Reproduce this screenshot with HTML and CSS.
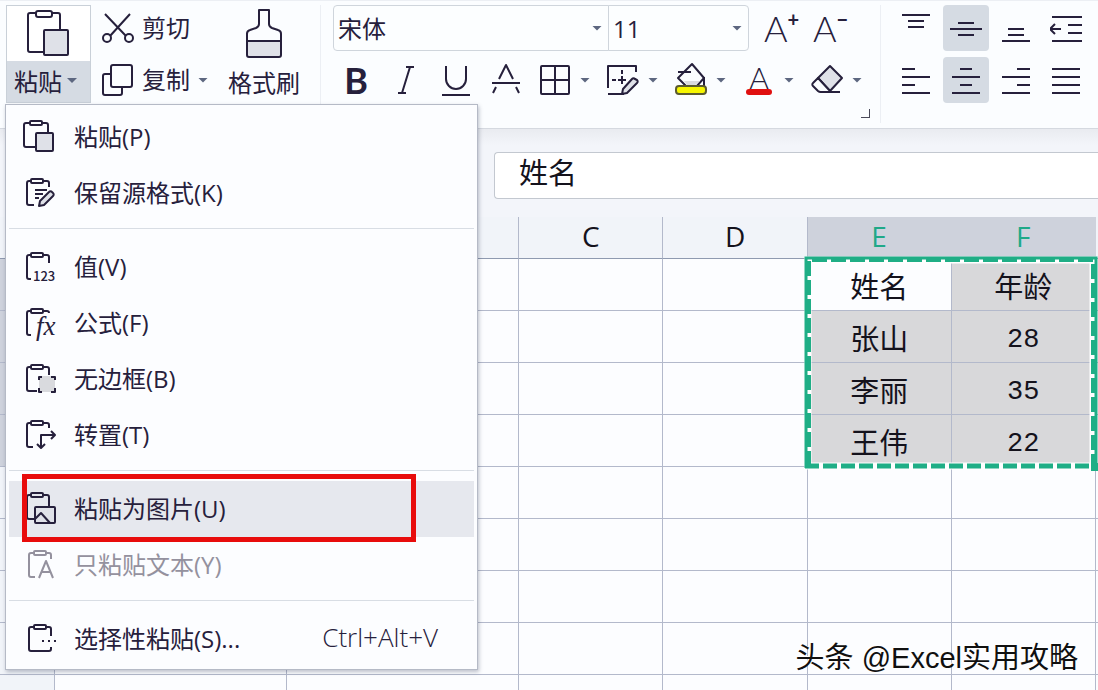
FILE: index.html
```html
<!DOCTYPE html>
<html lang="zh-CN">
<head>
    <meta charset="UTF-8">
    <meta name="viewport" content="width=device-width, initial-scale=1.0">
    <title>表格</title>
    <link rel="stylesheet" href="styles.css">
</head>
<body>

    <header class="ribbon">
        <div class="group clipboard">
            <div class="paste">
                <button class="paste-main" aria-label="粘贴">
                    <svg width="44" height="48" viewBox="0 0 44 48">
                        <path d="M16 42H3a2 2 0 0 1-2-2V5a2 2 0 0 1 2-2h6M25 3h6a2 2 0 0 1 2 2v14"/>
                        <rect x="9" y="1" width="16" height="6" rx="2"/>
                        <rect class="shade" x="17" y="20" width="24" height="25" rx="1"/>
                    </svg>
                </button>
                <button class="paste-more">粘贴<i class="arrow"></i></button>

                <div class="menu">
                    <button class="item">
                        <svg width="36" height="36" viewBox="0 0 36 36">
                            <path d="M14 28H4a2 2 0 0 1-2-2V6a2 2 0 0 1 2-2h4M20 4h4a2 2 0 0 1 2 2v7"/>
                            <rect x="8" y="2" width="12" height="4" rx="1"/>
                            <rect class="shade" x="14" y="14" width="17" height="18" rx="1"/>
                        </svg>
                        <span>粘贴(P)</span>
                    </button>
                    <button class="item">
                        <svg width="36" height="36" viewBox="0 0 36 36">
                            <path d="M12 30H7a2 2 0 0 1-2-2V8a2 2 0 0 1 2-2h2M21 6h4a2 2 0 0 1 2 2v4"/>
                            <rect x="9" y="4" width="12" height="4" rx="1"/>
                            <path d="M13 15h12M13 19h8M13 23h4"/>
                            <path class="shade" d="M17 31l1-5 9-9a2 2 0 0 1 3 0l1 1a2 2 0 0 1 0 3l-9 9z"/>
                        </svg>
                        <span>保留源格式(K)</span>
                    </button>
                    <hr>
                    <button class="item">
                        <svg width="36" height="36" viewBox="0 0 36 36">
                            <path d="M9 30H7a2 2 0 0 1-2-2V8a2 2 0 0 1 2-2h2M21 6h4a2 2 0 0 1 2 2v6"/>
                            <rect x="9" y="4" width="12" height="4" rx="1"/>
                            <text class="icon-num" x="11" y="32">123</text>
                        </svg>
                        <span>值(V)</span>
                    </button>
                    <button class="item">
                        <svg width="36" height="36" viewBox="0 0 36 36">
                            <path d="M9 30H7a2 2 0 0 1-2-2V8a2 2 0 0 1 2-2h2M21 6h4a2 2 0 0 1 2 2"/>
                            <rect x="9" y="4" width="12" height="4" rx="1"/>
                            <text class="icon-fx" x="14" y="30">fx</text>
                        </svg>
                        <span>公式(F)</span>
                    </button>
                    <button class="item">
                        <svg width="36" height="36" viewBox="0 0 36 36">
                            <path d="M15 30H7a2 2 0 0 1-2-2V8a2 2 0 0 1 2-2h2M21 6h4a2 2 0 0 1 2 2v6"/>
                            <rect x="9" y="4" width="12" height="4" rx="1"/>
                            <rect class="fill" x="17" y="15" width="16" height="16"/>
                            <path d="M17 19v-3h3M29 16h4v3M33 27v4h-4M20 31h-3v-4"/>
                        </svg>
                        <span>无边框(B)</span>
                    </button>
                    <button class="item">
                        <svg width="36" height="36" viewBox="0 0 36 36">
                            <path d="M11 30H7a2 2 0 0 1-2-2V8a2 2 0 0 1 2-2h2M21 6h4a2 2 0 0 1 2 2v3"/>
                            <rect x="9" y="4" width="12" height="4" rx="1"/>
                            <path d="M19 31V18h14M15 27l4 4 4-4M29 14l4 4-4 4"/>
                        </svg>
                        <span>转置(T)</span>
                    </button>
                    <hr>
                    <button class="item active">
                        <svg width="36" height="36" viewBox="0 0 36 36">
                            <path d="M12 28H7a2 2 0 0 1-2-2V6a2 2 0 0 1 2-2h2M21 4h4a2 2 0 0 1 2 2v9"/>
                            <rect x="9" y="2" width="12" height="4" rx="1"/>
                            <rect class="shade" x="13" y="16" width="20" height="16" rx="1"/>
                            <path d="M13 28l6-6 9 10"/>
                        </svg>
                        <span>粘贴为图片(U)</span>
                        <i class="mark"></i>
                    </button>
                    <button class="item" disabled>
                        <svg width="36" height="36" viewBox="0 0 36 36">
                            <path d="M13 30H9a2 2 0 0 1-2-2V8a2 2 0 0 1 2-2h3M24 6h3a2 2 0 0 1 2 2v4"/>
                            <rect x="12" y="4" width="12" height="4" rx="1"/>
                            <path d="M17 31l7-17 7 17M20 25h8"/>
                        </svg>
                        <span>只粘贴文本(Y)</span>
                    </button>
                    <hr>
                    <button class="item">
                        <svg width="36" height="36" viewBox="0 0 36 36">
                            <path d="M29 26v2a2 2 0 0 1-2 2H9a2 2 0 0 1-2-2V8a2 2 0 0 1 2-2h3M24 6h3a2 2 0 0 1 2 2v7"/>
                            <rect x="12" y="4" width="12" height="4" rx="1"/>
                            <path d="M20 20h2M26 20h2M32 20h2"/>
                        </svg>
                        <span>选择性粘贴(S)...</span>
                        <kbd>Ctrl+Alt+V</kbd>
                    </button>
                </div>
            </div>

            <div class="edit">
                <button>
                    <svg width="32" height="32" viewBox="0 0 32 32">
                        <path d="M3 2l21 22M28 2L8 24"/>
                        <circle cx="5" cy="26" r="4"/>
                        <circle cx="27" cy="26" r="4"/>
                    </svg>
                    <span>剪切</span>
                </button>
                <button>
                    <svg width="32" height="32" viewBox="0 0 32 32">
                        <path d="M9 10H3a2 2 0 0 0-2 2v17a2 2 0 0 0 2 2h15a2 2 0 0 0 2-2v-5"/>
                        <rect x="9" y="1" width="21" height="22" rx="2"/>
                    </svg>
                    <span>复制</span><i class="arrow"></i>
                </button>
            </div>

            <button class="brush">
                <svg width="38" height="50" viewBox="0 0 38 50">
                    <path class="shade" d="M2 32h34v14a2 2 0 0 1-2 2H4a2 2 0 0 1-2-2z"/>
                    <path d="M2 32v-7a4 4 0 0 1 3-4l6-2c2-1 3-2 3-4V1h10v14c0 2 1 3 3 4l6 2a4 4 0 0 1 3 4v7"/>
                </svg>
                格式刷
            </button>
        </div>

        <div class="group font">
            <div class="row">
                <label class="pick family">
                    <select aria-label="字体"><option>宋体</option></select>
                    <i class="arrow"></i>
                </label>
                <label class="pick size">
                    <select aria-label="字号"><option>11</option></select>
                    <i class="arrow"></i>
                </label>
                <button class="tool step" aria-label="增大字号">A<sup>+</sup></button>
                <button class="tool step" aria-label="减小字号">A<sup>−</sup></button>
            </div>
            <div class="row tools">
                <button class="tool bold" aria-label="加粗">B</button>
                <button class="tool" aria-label="倾斜">
                    <svg width="36" height="36" viewBox="0 0 36 36">
                        <path d="M18 5h8M22 5l-8 26M10 31h8"/>
                    </svg>
                </button>
                <button class="tool" aria-label="下划线">
                    <svg width="36" height="36" viewBox="0 0 36 36">
                        <path d="M8 4v13a10 10 0 0 0 20 0V4M4 33h28"/>
                    </svg>
                </button>
                <button class="tool" aria-label="删除线">
                    <svg width="36" height="36" viewBox="0 0 36 36">
                        <path d="M11 17l7-14 7 14M4 21h28M8 25l-3 6M28 25l3 6"/>
                    </svg>
                </button>
                <button class="tool drop" aria-label="边框">
                    <svg width="36" height="36" viewBox="0 0 36 36">
                        <rect x="4" y="4" width="28" height="28" rx="1"/>
                        <path d="M18 4v28M4 18h28"/>
                    </svg>
                    <i class="arrow"></i>
                </button>
                <button class="tool drop" aria-label="绘制边框">
                    <svg width="36" height="36" viewBox="0 0 36 36">
                        <path d="M3 26V4h28v6M3 32h16M17 8v4M17 14v8M7 18h4M13 18h8"/>
                        <path class="shade" d="M17 32l1-5 9-10a2 2 0 0 1 3 0l2 1a2 2 0 0 1 0 3L22 31z"/>
                    </svg>
                    <i class="arrow"></i>
                </button>
                <button class="tool drop" aria-label="填充颜色">
                    <svg width="36" height="36" viewBox="0 0 36 36">
                        <path d="M5 10h13"/>
                        <path d="M19 2L5 16l9 9h9l8-9zM31 15v9"/>
                        <path class="fill" d="M11 19h16l-6 5h-6z"/>
                        <rect class="yellow" x="3" y="24" width="30" height="8" rx="3"/>
                    </svg>
                    <i class="arrow"></i>
                </button>
                <button class="tool drop color" aria-label="字体颜色">
                    <span class="letter">A</span>
                    <i class="arrow"></i>
                </button>
                <button class="tool drop" aria-label="清除">
                    <svg width="36" height="36" viewBox="0 0 36 36">
                        <path class="shade" d="M21 4l12 12-12 13-12-13z"/>
                        <path class="paper" d="M9 16l-5 5a2 2 0 0 0 0 3l5 5a4 4 0 0 0 3 1h9v-1z"/>
                        <path d="M12 30h19"/>
                    </svg>
                    <i class="arrow"></i>
                </button>
            </div>
            <button class="launcher" aria-label="字体设置"></button>
        </div>

        <div class="group align">
            <button class="cell" aria-label="顶端对齐"><svg width="32" height="32" viewBox="0 0 32 32"><path d="M2 3h28M8 9h16M8 15h16"/></svg></button>
            <button class="cell on" aria-label="垂直居中"><svg width="32" height="32" viewBox="0 0 32 32"><path d="M8 11h16M0 17h32M8 23h16"/></svg></button>
            <button class="cell" aria-label="底端对齐"><svg width="32" height="32" viewBox="0 0 32 32"><path d="M8 17h16M8 23h16M2 29h28"/></svg></button>
            <button class="cell" aria-label="减少缩进"><svg width="32" height="32" viewBox="0 0 32 32"><path d="M2 5h30M18 13h14M18 21h14M2 29h30M11 17H0M5 12l-5 5 5 5"/></svg></button>
            <button class="cell" aria-label="左对齐"><svg width="32" height="32" viewBox="0 0 32 32"><path d="M2 5h13M2 13h28M2 21h13M2 29h28"/></svg></button>
            <button class="cell on" aria-label="水平居中"><svg width="32" height="32" viewBox="0 0 32 32"><path d="M10 5h12M2 13h28M10 21h12M2 29h28"/></svg></button>
            <button class="cell" aria-label="右对齐"><svg width="32" height="32" viewBox="0 0 32 32"><path d="M17 5h13M2 13h28M17 21h13M2 29h28"/></svg></button>
            <button class="cell" aria-label="两端对齐"><svg width="32" height="32" viewBox="0 0 32 32"><path d="M2 5h28M2 13h28M2 21h28M2 29h28"/></svg></button>
        </div>
    </header>

    <div class="formula">
        <input type="text" value="姓名" aria-label="编辑栏">
    </div>

    <main class="sheet">
        <table>
            <colgroup>
                <col class="col-head"><col class="col-wide"><col class="col-wide">
                <col><col><col><col><col>
            </colgroup>
            <thead>
                <tr><th></th><th></th><th></th><th>C</th><th>D</th><th class="sel">E</th><th class="sel">F</th><th></th></tr>
            </thead>
            <tbody>
                <tr><th class="sel"></th><td></td><td></td><td></td><td></td><td>姓名</td><td class="sel">年龄</td><td></td></tr>
                <tr><th class="sel"></th><td></td><td></td><td></td><td></td><td class="sel">张山</td><td class="sel num">28</td><td></td></tr>
                <tr><th class="sel"></th><td></td><td></td><td></td><td></td><td class="sel">李丽</td><td class="sel num">35</td><td></td></tr>
                <tr><th class="sel"></th><td></td><td></td><td></td><td></td><td class="sel">王伟</td><td class="sel num">22</td><td></td></tr>
                <tr><th></th><td></td><td></td><td></td><td></td><td></td><td></td><td></td></tr>
                <tr><th></th><td></td><td></td><td></td><td></td><td></td><td></td><td></td></tr>
                <tr><th></th><td></td><td></td><td></td><td></td><td></td><td></td><td></td></tr>
                <tr><th></th><td></td><td></td><td></td><td></td><td></td><td></td><td></td></tr>
                <tr><th></th><td></td><td></td><td></td><td></td><td></td><td></td><td></td></tr>
            </tbody>
        </table>
        <!-- copied range -->
        <svg class="ants" width="296" height="216" viewBox="0 0 296 216">
            <rect class="ants-white" x="4" y="4" width="285" height="206"/>
            <path class="ants-edge" d="M2 212V2h290v210"/>
            <path class="ants-dash" d="M5 210V4h284v206"/>
            <path class="ants-bottom" d="M1 210h288"/>
            <rect class="ants-handle" x="287" y="207" width="8" height="8"/>
        </svg>
    </main>

    <div class="watermark">头条 @Excel实用攻略</div>

</body>
</html>
```

FILE: styles.css
```css
* {
    box-sizing: border-box;
}
body {
    margin: 0;
    height: 100vh;
    overflow: hidden;
    position: relative;
    display: flex;
    flex-direction: column;
    font-family: "Open Sans", "Noto Sans CJK SC", sans-serif;
    font-size: 24px;
    color: #26203c;
    background: #f3f5fa;
}
button {
    font: inherit;
    color: inherit;
    background: none;
    border: none;
    padding: 0;
    cursor: pointer;
}
svg {
    flex: none;
    fill: none;
    stroke: #26203c;
    stroke-width: 2;
    stroke-linejoin: round;
}
.shade {
    fill: #dfe1e8;
}
.paper {
    fill: #fbfdff;
}
.fill {
    fill: #d9dade;
    stroke: none;
}
.yellow {
    fill: #f6f600;
    stroke: #5c5c30;
}
.arrow {
    flex: none;
    width: 10px;
    height: 5px;
    background: #5d6780;
    clip-path: polygon(0 0, 100% 0, 50% 100%);
}

/* Ribbon */
.ribbon {
    flex: none;
    display: flex;
    height: 129px;
    padding: 4px 0 0 6px;
    background: #fbfdff;
    border-top: 1px solid #eceff4;
    border-bottom: 1px solid #d5d9e0;
}
.clipboard {
    display: flex;
    width: 315px;
    border-right: 1px solid #eceff4;
    margin-bottom: 5px;
}
.paste {
    position: relative;
    width: 85px;
    height: 98px;
    display: flex;
    flex-direction: column;
    border: 1px solid #c9d0d8;
    background: #d5dbe3;
}
.paste-main {
    height: 55px;
    background: #ffffff;
    display: flex;
    align-items: center;
    justify-content: center;
}
.paste-more {
    flex: 1;
    display: flex;
    align-items: center;
    justify-content: center;
    gap: 5px;
    padding: 0 6px 2px 0;
}
.edit {
    display: flex;
    flex-direction: column;
    gap: 6px;
    margin-left: 11px;
    width: 116px;
}
.edit button {
    height: 46px;
    display: flex;
    align-items: center;
    gap: 8px;
}
.edit span,
.item span,
.item kbd {
    padding-bottom: 4px;
}
.brush {
    height: 98px;
    margin-left: 10px;
    display: flex;
    flex-direction: column;
    align-items: center;
    justify-content: space-between;
    padding: 4px 0 2px;
    line-height: 36px;
}
.font {
    display: flex;
    flex-direction: column;
    gap: 6px;
    width: 560px;
    padding-left: 12px;
    border-right: 1px solid #eceff4;
    margin-bottom: 5px;
}
.row {
    display: flex;
    height: 46px;
}
.pick {
    position: relative;
    display: flex;
    align-items: center;
    border: 1px solid #cfd5dc;
    background: #fcfeff;
}
.pick.family {
    width: 276px;
    border-radius: 4px 0 0 4px;
}
.pick.size {
    width: 141px;
    margin-left: -1px;
    border-radius: 0 4px 4px 0;
}
.pick select {
    appearance: none;
    width: 100%;
    height: 100%;
    padding: 0 4px;
    border: none;
    background: none;
    font: inherit;
    color: inherit;
}
.pick .arrow {
    position: absolute;
    right: 6px;
}
.tools {
    margin-left: -2px;
}
.tool {
    width: 50px;
    height: 46px;
    display: flex;
    align-items: center;
    justify-content: center;
    font-size: 36px;
    line-height: 46px;
}
.tool.drop {
    width: 68px;
    justify-content: flex-start;
    padding-left: 6px;
    gap: 7px;
}
.step {
    font-family: Lato, sans-serif;
    font-weight: 300;
    margin-left: 6px;
    width: 43px;
}
.row .step:first-of-type {
    margin-left: 11px;
}
.step sup {
    align-self: flex-start;
    font-size: 20px;
    font-weight: 700;
    line-height: 28px;
}
.bold {
    font-family: Lato, sans-serif;
    font-weight: 700;
}
.letter {
    display: flex;
    flex-direction: column;
    align-items: center;
    width: 36px;
    font-family: Lato, sans-serif;
    font-size: 30px;
    font-weight: 300;
    line-height: 24px;
}
.letter::after {
    content: "";
    width: 26px;
    height: 6px;
    border-radius: 3px;
    background: #e01010;
}
.launcher {
    width: 9px;
    height: 9px;
    margin-right: 10px;
    align-self: flex-end;
    border-right: 1px solid #4a4a5a;
    border-bottom: 1px solid #4a4a5a;
}
.align {
    display: grid;
    grid-template-columns: repeat(4, 46px);
    grid-auto-rows: 46px;
    gap: 6px 4px;
    padding-left: 12px;
}
.cell {
    display: flex;
    align-items: center;
    justify-content: center;
    border-radius: 4px;
}
.cell.on {
    background: #d5dbe3;
}

/* Paste menu */
.menu {
    position: absolute;
    z-index: 2;
    top: 98px;
    left: -2px;
    width: 473px;
    padding: 4px 3px 2px;
    background: #fcfdff;
    border: 1px solid #b5bac6;
    box-shadow: 1px 2px 4px rgba(40, 50, 80, 0.3);
}
.item {
    position: relative;
    display: flex;
    align-items: center;
    width: 100%;
    height: 56px;
    padding: 0 36px 0 13px;
    gap: 16px;
    text-align: left;
}
.item.active {
    background: #e6e8ee;
}
.item:disabled {
    color: #94919e;
}
.item:disabled svg {
    stroke: #94919e;
}
.item kbd {
    margin-left: auto;
    font-family: inherit;
    font-size: 26px;
    font-weight: 300;
}
.menu hr {
    height: 1px;
    margin: 7px 0 10px;
    border: none;
    background: #d8dde4;
}
.mark {
    position: absolute;
    top: -7px;
    left: 13px;
    width: 394px;
    height: 68px;
    border: 5px solid #e80c0c;
}
.icon-num,
.icon-fx {
    fill: #26203c;
    stroke: none;
}
.icon-num {
    font: 500 13px "Noto Sans CJK SC", sans-serif;
}
.icon-fx {
    font: italic 27px "Liberation Serif", serif;
}

/* Formula bar */
.formula {
    flex: none;
    display: flex;
    height: 88px;
    padding: 23px 0 0 494px;
    background: linear-gradient(#e9ebf0, #f3f5fa 16px);
}
.formula input {
    flex: 1;
    min-width: 0;
    height: 47px;
    padding: 0 24px 10px;
    border: 1px solid #c3c8d0;
    border-right: none;
    border-radius: 4px 0 0 4px;
    background: #ffffff;
    font: 29px/36px "Noto Sans CJK SC", sans-serif;
    color: #14121c;
}

/* Sheet */
.sheet {
    position: relative;
    flex: 1;
    min-height: 0;
    overflow: hidden;
}
table {
    width: 1240px;
    table-layout: fixed;
    border-collapse: separate;
    border-spacing: 0;
    background: #fcfdff;
}
.col-head {
    width: 55px;
}
.col-wide {
    width: 232px;
}
col {
    width: 144px;
}
th,
td {
    height: 52px;
    padding: 0;
    border-right: 1px solid #b3b9cb;
    border-bottom: 1px solid #b3b9cb;
    text-align: center;
    font: 29px/48px "Noto Sans CJK SC", sans-serif;
    color: #14121c;
}
th {
    background: #f1f4f9;
}
thead th {
    height: 42px;
    padding-bottom: 4px;
    font: 28px/36px "Open Sans", sans-serif;
    border-bottom-color: #8f9ab0;
}
th.sel {
    background: #ced2dc;
    color: #1fa988;
}
thead th.sel {
    border-right-color: #ced2dc;
}
td.sel {
    background: #d8d8da;
}
td.num {
    padding-top: 6px;
    font: 27px/44px "Liberation Mono", monospace;
}
.ants {
    position: absolute;
    top: 39px;
    left: 804px;
    stroke-linejoin: miter;
}
.ants-white {
    stroke: #ffffff;
    stroke-width: 7;
}
.ants-edge,
.ants-dash,
.ants-bottom {
    stroke: #1fae86;
}
.ants-edge {
    stroke-width: 3;
}
.ants-dash {
    stroke-width: 4;
    stroke-dasharray: 15 4;
}
.ants-bottom {
    stroke-width: 5;
    stroke-dasharray: 14 4;
}
.ants-handle {
    fill: #1fae86;
    stroke: none;
}

.watermark {
    position: absolute;
    right: 20px;
    bottom: 12px;
    font: 29px/40px "Liberation Sans", "Noto Sans CJK SC", sans-serif;
    color: #101010;
    text-shadow: -1px -1px 0 #ffffff;
}
```
